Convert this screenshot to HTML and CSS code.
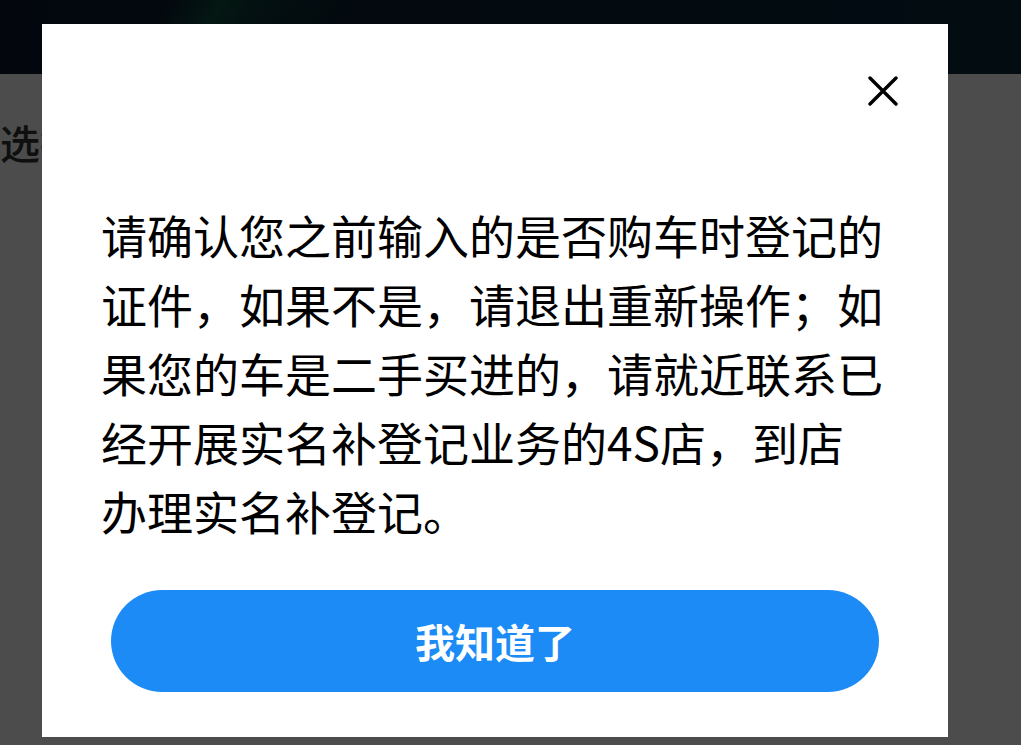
FILE: index.html
```html
<!DOCTYPE html>
<html lang="zh-CN">
<head>
<meta charset="utf-8">
<title>提示</title>
<link rel="stylesheet" href="styles.css">
</head>
<body>
<div class="page">
  <header class="topbar"></header>
  <main class="content">
    <div class="section-title">选择证件类型</div>
  </main>
</div>
<div class="mask"></div>
<div class="dialog" role="dialog">
  <div class="dialog-head">
    <button class="close" aria-label="关闭">
      <svg viewBox="0 0 30 30" width="30" height="30"><path d="M2 2 L28 28 M28 2 L2 28" stroke="#000" stroke-width="3.4" stroke-linecap="round" fill="none"/></svg>
    </button>
  </div>
  <p class="dialog-text">请确认您之前输入的是否购车时登记的证件，如果不是，请退出重新操作；如果您的车是二手买进的，请就近联系已经开展实名补登记业务的4S店，到店办理实名补登记。</p>
  <button class="confirm">我知道了</button>
</div>
</body>
</html>
```

FILE: styles.css
```css
* { box-sizing: border-box; }
html, body {
  margin: 0;
  padding: 0;
  width: 1021px;
  height: 745px;
  overflow: hidden;
  font-family: "Noto Sans CJK SC", "Noto Sans", sans-serif;
}
.page {
  height: 745px;
  background: #ffffff;
}
.topbar {
  height: 74px;
  background:
    linear-gradient(120deg, rgba(16,110,70,0) 0%, rgba(16,110,70,0) 16%, rgba(18,120,78,0.55) 21%, rgba(16,110,70,0.25) 26%, rgba(16,110,70,0) 34%),
    linear-gradient(90deg, #0a1a2e 0%, #0b2236 50%, #07293a 100%);
}
.content {
  padding: 48px 0 0 0;
}
.section-title {
  font-size: 40px;
  line-height: 40px;
  font-weight: 500;
  color: #333;
  white-space: nowrap;
}
.mask {
  position: fixed;
  inset: 0;
  background: rgba(0, 0, 0, 0.7);
}
.dialog {
  position: absolute;
  left: 42px;
  top: 24px;
  width: 906px;
  height: 713px;
  background: #fff;
  padding: 52px 59px 45px 59px;
  display: flex;
  flex-direction: column;
}
.dialog-head {
  display: flex;
  justify-content: flex-end;
  margin-right: -9px;
}
.close {
  width: 30px;
  height: 30px;
  padding: 0;
  border: 0;
  background: none;
  display: block;
}
.close svg { display: block; }
.dialog-text {
  margin: 94px 0 0 0;
  font-size: 46px;
  line-height: 69px;
  color: #000;
}
.confirm {
  margin: auto 10px 0 10px;
  height: 102px;
  border: 0;
  border-radius: 51px;
  background: #1c8bf6;
  color: #fff;
  font-family: "Noto Sans CJK SC", sans-serif;
  font-size: 40px;
  font-weight: 700;
}
```
